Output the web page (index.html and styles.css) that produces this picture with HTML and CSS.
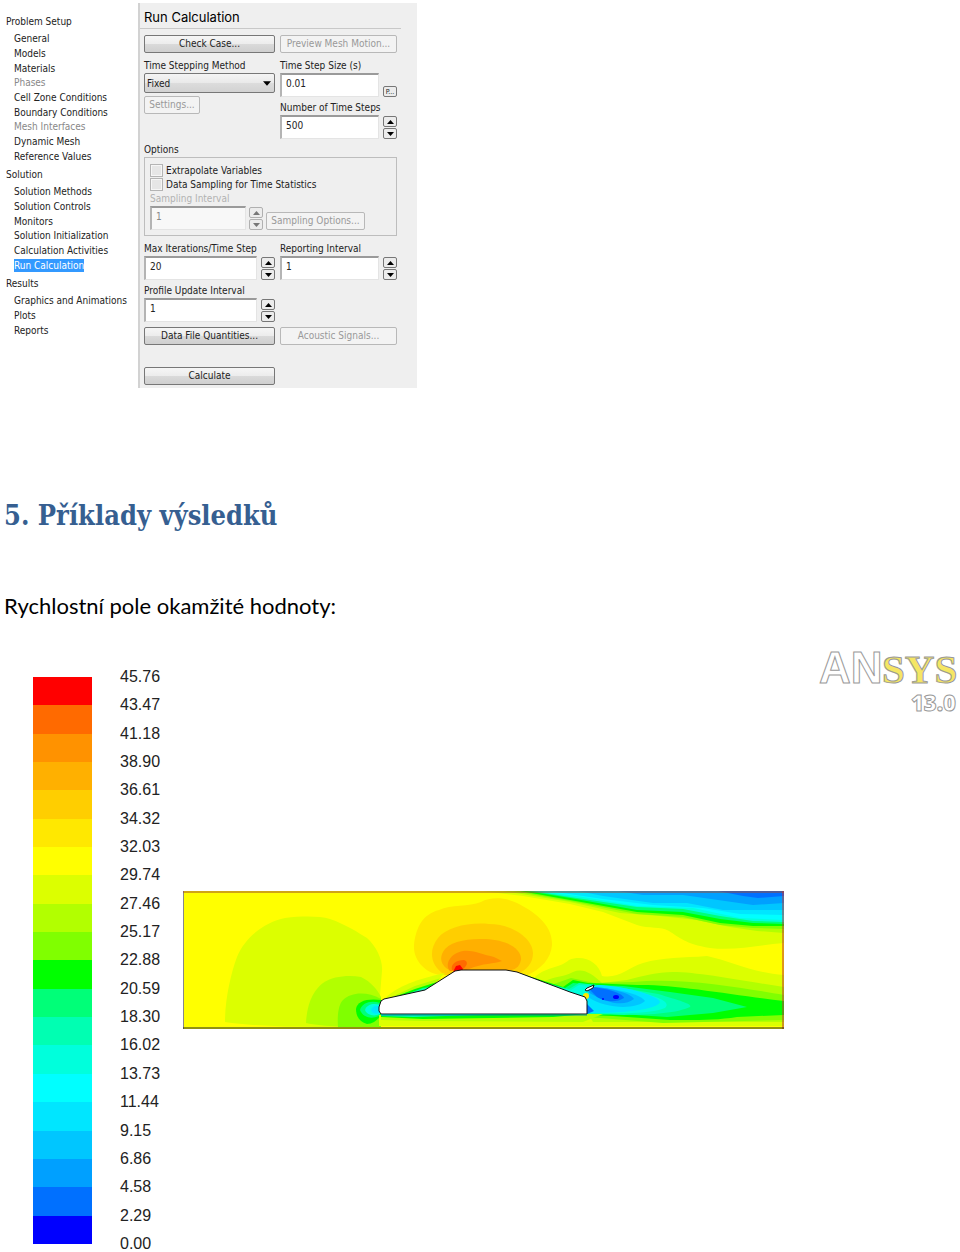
FILE: index.html
```html
<!DOCTYPE html>
<html lang="cs">
<head>
<meta charset="utf-8">
<meta name="viewport" content="width=device-width, initial-scale=1">
<title>Příklady výsledků</title>
<link rel="stylesheet" href="styles.css">
</head>
<body>
<svg class="defs" width="0" height="0" aria-hidden="true">
  <symbol id="up" viewBox="0 0 7 4"><path d="M0 4 3.500 0 7 4z"/></symbol>
  <symbol id="down" viewBox="0 0 7 4"><path d="M0 0h7L3.500 4z"/></symbol>
</svg>
<main class="page">
  <section class="solver">
    <nav class="tree" aria-label="Problem Setup">
      <h2 class="tree-title">Problem Setup</h2>
      <ul class="tree-list tree-setup">
        <li>General</li><li>Models</li><li>Materials</li><li class="muted">Phases</li><li>Cell Zone Conditions</li><li>Boundary Conditions</li><li class="muted">Mesh Interfaces</li><li>Dynamic Mesh</li><li>Reference Values</li>
      </ul>
      <h2 class="tree-title">Solution</h2>
      <ul class="tree-list tree-solution">
        <li>Solution Methods</li><li>Solution Controls</li><li>Monitors</li><li>Solution Initialization</li><li>Calculation Activities</li><li><span class="selected">Run Calculation</span></li>
      </ul>
      <h2 class="tree-title">Results</h2>
      <ul class="tree-list tree-results">
        <li>Graphics and Animations</li><li>Plots</li><li>Reports</li>
      </ul>
    </nav>

    <form class="panel">
      <h2 class="panel-title">Run Calculation</h2>
      <div class="panel-body">
        <div class="columns">
          <button class="btn" type="button">Check Case...</button>
          <button class="btn" type="button" disabled>Preview Mesh Motion...</button>
        </div>
        <div class="columns">
          <div class="stack">
            <div class="field">
              <label for="method">Time Stepping Method</label>
              <div class="select-wrap">
                <select class="select" id="method"><option>Fixed</option></select>
                <svg class="caret"><use href="#down"/></svg>
              </div>
            </div>
            <button class="btn btn-small" type="button" disabled>Settings...</button>
          </div>
          <div class="stack">
            <div class="field">
              <label for="size">Time Step Size (s)</label>
              <div class="entry"><input class="text" id="size" value="0.01"><button class="mini" type="button">P...</button></div>
            </div>
            <div class="field">
              <label for="steps">Number of Time Steps</label>
              <div class="entry"><input class="text" id="steps" value="500">
                <span class="spin"><button type="button" aria-label="Increase"><svg><use href="#up"/></svg></button><button type="button" aria-label="Decrease"><svg><use href="#down"/></svg></button></span>
              </div>
            </div>
          </div>
        </div>
        <fieldset class="options">
          <legend>Options</legend>
          <div class="options-box">
            <label class="check"><input type="checkbox">Extrapolate Variables</label>
            <label class="check"><input type="checkbox">Data Sampling for Time Statistics</label>
            <label class="disabled" for="sampling">Sampling Interval</label>
            <div class="entry sampling"><input class="text" id="sampling" value="1" disabled>
              <span class="spin"><button type="button" aria-label="Increase" disabled><svg><use href="#up"/></svg></button><button type="button" aria-label="Decrease" disabled><svg><use href="#down"/></svg></button></span>
              <button class="btn btn-sampling" type="button" disabled>Sampling Options...</button>
            </div>
          </div>
        </fieldset>
        <div class="columns intervals">
          <div class="field">
            <label for="max">Max Iterations/Time Step</label>
            <div class="entry"><input class="text" id="max" value="20">
              <span class="spin"><button type="button" aria-label="Increase"><svg><use href="#up"/></svg></button><button type="button" aria-label="Decrease"><svg><use href="#down"/></svg></button></span>
            </div>
          </div>
          <div class="field">
            <label for="report">Reporting Interval</label>
            <div class="entry"><input class="text" id="report" value="1">
              <span class="spin"><button type="button" aria-label="Increase"><svg><use href="#up"/></svg></button><button type="button" aria-label="Decrease"><svg><use href="#down"/></svg></button></span>
            </div>
          </div>
          <div class="field">
            <label for="profile">Profile Update Interval</label>
            <div class="entry"><input class="text" id="profile" value="1">
              <span class="spin"><button type="button" aria-label="Increase"><svg><use href="#up"/></svg></button><button type="button" aria-label="Decrease"><svg><use href="#down"/></svg></button></span>
            </div>
          </div>
        </div>
        <div class="columns actions">
          <button class="btn" type="button">Data File Quantities...</button>
          <button class="btn" type="button" disabled>Acoustic Signals...</button>
          <button class="btn" type="button">Calculate</button>
        </div>
      </div>
    </form>
  </section>

  <h1 class="heading">5. Příklady výsledků</h1>
  <p class="intro">Rychlostní pole okamžité hodnoty:</p>

  <figure class="result">
    <div class="legend">
      <div class="scale" aria-hidden="true">
        <i class="c19"></i><i class="c18"></i><i class="c17"></i><i class="c16"></i><i class="c15"></i><i class="c14"></i><i class="c13"></i><i class="c12"></i><i class="c11"></i><i class="c10"></i><i class="c9"></i><i class="c8"></i><i class="c7"></i><i class="c6"></i><i class="c5"></i><i class="c4"></i><i class="c3"></i><i class="c2"></i><i class="c1"></i><i class="c0"></i>
      </div>
      <ul class="values">
        <li>45.76</li><li>43.47</li><li>41.18</li><li>38.90</li><li>36.61</li><li>34.32</li><li>32.03</li><li>29.74</li><li>27.46</li><li>25.17</li><li>22.88</li><li>20.59</li><li>18.30</li><li>16.02</li><li>13.73</li><li>11.44</li><li>9.15</li><li>6.86</li><li>4.58</li><li>2.29</li><li>0.00</li>
      </ul>
    </div>

    <svg class="plot" viewBox="0 0 601 138" role="img" aria-label="Rychlostní pole">
      <rect class="c13" width="601" height="138"/>
      <!-- stagnation zone ahead of the nose -->
      <path class="c12" d="M42 131C42 108 48 82 54 66C62 46 82 31 102 27C120 25 136 25 147 28C162 33 176 42 184 47C194 56 200 70 199 80L197 104V136C150 136 80 137 42 131z"/>
      <path class="c11" d="M123 132C124 110 132 98 140 92C150 85 166 84 178 86C188 91 194 98 198 106V136C170 136 140 136 123 132z"/>
      <path class="c10" d="M155 136C154 122 156 113 160 109C168 101 184 100 198 108V136z"/>
      <path class="c9" d="M173 118C174 110 184 107 199 109L198 125C193 130 189 133 184 133C177 131 173 126 173 118z"/>
      <path class="c8" d="M177 119C179 111 189 109 197 112V124C190 129 180 127 177 119z"/>
      <path class="c6" d="M182 119C184 113 191 112 197 114V123C191 126 184 124 182 119z"/>
      <path class="c4" d="M188 119C190 114 194 114 197 116V122C192 124 189 122 188 119z"/>
      <!-- accelerated flow above the roof -->
      <path class="c14" d="M257 84C243 82 230 70 231 54C233 36 240 23 256 19C268 13 286 16 298 11C307 6 322 6 334 12C350 20 370 33 369 54C368 68 358 78 343 85z"/>
      <path class="c15" d="M262 84C246 74 246 58 255 47C264 36 286 31 306 33C330 33 350 48 350 62C350 72 344 79 334 83z"/>
      <path class="c16" d="M268 80C255 74 257 64 262 58C270 49 286 48 303 48C324 49 339 58 338 69C336 77 332 79 322 80z"/>
      <path class="c17" d="M267 80C261 73 268 62 280 60C292 59 300 64 311 66L319 70C311 73 300 72 286 78L280 80z"/>
      <path class="c18" d="M269 79C267 73 274 69 281 69C286 71 284 75 279 79z"/>
      <path class="c19" d="M270 81 273 75 277 74 280 78 278 81z"/>
      <!-- slow layer under the upper boundary -->
      <path class="c12" d="M300 0 340 5 387 13 420 21 454 34C466 38 478 35 486 40C496 46 502 53 527 57C552 60 576 54 601 52V0z"/>
      <path class="c11" d="M320 0 387 11 437 22 477 25 514 29 547 36 574 40 601 42V0z"/>
      <path class="c10" d="M330 0 387 10 454 23 500 26 537 34 570 37 601 38V0z"/>
      <path class="c9" d="M337 0 387 9 454 21 500 24 537 32 570 35 601 35V0z"/>
      <path class="c8" d="M344 0 387 7 454 19 500 21 537 28 570 32 601 33V0z"/>
      <path class="c6" d="M350 0 387 6 454 16 500 18 537 25 570 30 601 31V0z"/>
      <path class="c5" d="M357 0 400 6 454 15 510 17 557 27 601 29V0z"/>
      <path class="c4" d="M366 0 420 8 470 14 520 17 557 23 601 24V0z"/>
      <path class="c3" d="M395 0 420 5 470 12 504 12 540 19 601 19V0z"/>
      <path class="c2" d="M435 0 460 4 500 4 535 9 570 14 601 12V0z"/>
      <path class="c1" d="M535 0 560 5 575 7 601 5V0z"/>
      <!-- wake -->
      <path class="c12" d="M350 88C362 75 376 78 386 69C400 63 416 71 419 85C436 88 444 77 460 72C480 66 500 67 524 65C548 70 570 82 601 84V135H196V124H404z"/>
      <path class="c11" d="M362 90C372 85 382 86 390 81C400 77 408 82 419 92L444 89C460 85 474 81 490 81C516 81 560 90 601 96V131H410L398 110z"/>
      <path class="c10" d="M368 94 388 87 412 92 450 91C500 86 560 97 601 104V129L480 132 404 126z"/>
      <path class="c9" d="M336 82 380 96 390 89 405 92 454 94C490 93 550 104 601 110V124L554 126C530 130 500 129 487 129L430 125 404 124z"/>
      <path class="c8" d="M350 88 382 97 390 92 414 94 440 95 487 101 530 107 564 116 530 122 484 126 437 123 404 123z"/>
      <path class="c7" d="M360 92 386 98 396 92 440 97 475 103C495 109 510 113 507 116C490 124 450 125 404 123z"/>
      <path class="c6" d="M366 95 388 99 396 94 430 96 455 101C478 106 488 112 482 117C465 124 430 122 404 122z"/>
      <path class="c4" d="M414 94C434 94 474 103 477 111C474 119 440 122 404 122L405 104z"/>
      <path class="c3" d="M409 97C425 96 458 102 462 110C454 118 424 119 405 106z"/>
      <path class="c2" d="M408 96C424 96 448 102 451 108C442 115 426 114 405 101z"/>
      <path class="c1" d="M408 96C422 97 440 102 441 107C435 111 424 112 414 106L406 98z"/>
      <ellipse class="c0" cx="433" cy="106" rx="3" ry="2"/>
      <circle class="c0" cx="420" cy="108" r="1"/>
      <path class="c1" d="M404 113 411 120 404 123z"/>
      <circle class="c14" cx="403" cy="105" r="3"/>
      <!-- hood and underbody layers -->
      <path class="c12" d="M200 109C215 94 235 88 262 82L242 101z"/>
      <path class="c11" d="M202 109 232 95 258 87 242 101z"/>
      <path class="c9" d="M206 108 232 98 254 91 242 100z"/>
      <path class="c7" d="M216 106 240 97 247 96 241 100z"/>
      <path class="c11" d="M198 123H420L400 131 240 130 198 129z"/>
      <path class="c9" d="M198 123H404L370 126 240 128 198 126z"/>
      <path class="c7" d="M198 123H330L230 126 198 125z"/>
      <path class="car" d="M196 116 198 110 201 108 242 99 272 80 278 79H323L334 81 387 101 402 106 404 110V123H198L196 120z"/>
      <path class="underbody" d="M198 124H404"/>
      <path class="car" d="M402 99 404 97 411 94 410 97 404 100z"/>
      <path class="wall-left" d="M.5 0V138"/>
      <path class="wall-top" d="M0 1H601"/>
      <path class="wall-right" d="M600 0V138"/>
      <path class="wall-bottom" d="M0 137H601"/>
    </svg>

    <svg class="logo" viewBox="0 0 142 68" role="img" aria-label="ANSYS 13.0">
      <text class="logo-an" x="1" y="35">AN</text>
      <text class="logo-sys" x="64" y="35">SYS</text>
      <text class="logo-version" x="138" y="63">13.0</text>
    </svg>
  </figure>
</main>
</body>
</html>
```
FILE: styles.css
```css
* { box-sizing: border-box; }
body { margin: 0; background: #fff; color: #000; }
h1, h2, p, ul, figure, fieldset { margin: 0; padding: 0; font-weight: 400; }
ul { list-style: none; }
.defs { display: block; height: 0; }
.page { padding-top: 3px; }

/* Solver window */
.solver, .solver button, .solver input, .solver select {
  font-family: "DejaVu Sans Condensed", "DejaVu Sans", sans-serif;
  font-size: 10px;
  color: #222;
}
.solver { display: flex; align-items: stretch; }
.tree { width: 138px; flex: none; padding: 8px 0 0 6px; white-space: nowrap; }
.tree-title { font-size: 10px; line-height: 21px; }
.tree-list { display: grid; grid-auto-rows: 1fr; align-items: center; padding-left: 8px; line-height: 14px; }
.tree-setup { min-height: 132px; }
.tree-solution { min-height: 88px; }
.tree-results { min-height: 44px; }
.muted { color: #888; }
.selected { display: inline-block; line-height: 13px; background: #3399ff; color: #fff; }

.panel { width: 279px; background: #efefef; border-left: 2px solid #d2d2d2; padding-bottom: 3px; }
.panel-title {
  margin-right: 16px; padding: 4px 0 0 4px;
  border-bottom: 1px solid #c8c8c8;
  font: 13px/21px Inter, "Liberation Sans", sans-serif; color: #000;
}
.panel-body { display: flex; flex-direction: column; gap: 5px; padding: 6px 20px 0 4px; white-space: nowrap; }
.columns { display: grid; grid-template-columns: 131px minmax(0, 1fr); column-gap: 5px; row-gap: 3px; }
.stack { display: flex; flex-direction: column; gap: 3px; align-items: stretch; min-width: 0; }
.field { min-width: 0; }
.field label, .options legend { display: block; line-height: 15px; }
.btn {
  height: 18px; padding: 0 4px; line-height: 14px;
  border: 1px solid #777; border-radius: 2px;
  background: linear-gradient(#f6f6f6, #ececec 50%, #dadada 51%, #cfcfcf);
}
.solver .btn:disabled { color: #999; background: #f3f3f3; border-color: #b8b8b8; }
.btn-small { align-self: flex-start; width: 56px; }
.select-wrap { position: relative; }
.select {
  display: block; appearance: none; width: 100%; height: 20px; padding: 0 2px;
  border: 1px solid #777; border-radius: 2px;
  background: linear-gradient(#f4f4f4, #e9e9e9 50%, #dcdcdc 51%, #d2d2d2);
}
.caret { position: absolute; right: 4px; top: 8px; width: 8px; height: 5px; }
.entry { display: flex; gap: 4px; height: 24px; align-items: flex-end; }
.text {
  flex: 1 1 0; width: 0; min-width: 0; height: 24px; padding: 0 4px 4px;
  border: 1px solid #e4e4e4; border-top: 2px solid #9a9a9a; border-left: 2px solid #b4b4b4;
  background: #fff;
}
.text:disabled { background: #f8f8f8; }
.solver .text:disabled { color: #888; }
.spin { display: flex; flex: none; flex-direction: column; width: 14px; gap: 1px; }
.spin button, .mini {
  display: flex; flex: none; align-items: center; justify-content: center;
  width: 14px; height: 11px; padding: 0;
  border: 1px solid #777; border-radius: 2px; background: #ececec;
}
.spin svg { width: 7px; height: 4px; }
.spin button:disabled { border-color: #b0b0b0; }
.spin button:disabled svg { fill: #777; }
.solver .mini { font-size: 7px; }
.options { border: 0; min-width: 0; margin-top: -2px; }
.options legend { padding: 0; }
.options-box { border: 1px solid #bdbdbd; padding: 5px; }
.check { display: flex; align-items: center; gap: 3px; height: 14px; }
.check input {
  appearance: none; width: 13px; height: 13px; margin: 0;
  border: 1px solid #b4b4b4; background: #e6e6e6; box-shadow: inset 0 0 0 1px #f6f6f6;
}
.disabled { display: block; line-height: 15px; color: #b2b2b2; }
.sampling { gap: 3px; }
.sampling .text { flex: 0 0 96px; }
.btn-sampling { width: 99px; }
.actions { row-gap: 22px; }

/* Document text */
.heading {
  margin-top: 110px; padding-left: 4px;
  font: 700 27px/36px "DejaVu Serif Condensed", "DejaVu Serif", serif;
  color: #365f91;
}
.intro { margin-top: 57px; padding-left: 4px; font: 22px/30px Lato, sans-serif; }

/* Velocity field */
.result {
  display: grid; grid-template-columns: 183px minmax(0, 1fr) 142px; align-items: start;
  margin-top: 27px;
}
.legend { display: grid; grid-template-columns: 59px auto; column-gap: 28px; height: 583px; margin-top: 21px; padding-left: 33px; }
.scale { display: flex; flex-direction: column; margin: 8px 0; }
.scale i { flex: 1; }
.values {
  display: flex; flex-direction: column; justify-content: space-between;
  font: 16px/16px "Liberation Sans", Arial, sans-serif; color: #222;
}
.plot { display: block; width: calc(100% - 34px); margin-top: 243px; }
.logo { display: block; width: 100%; overflow: visible; }

.c19 { background: #ff0000; fill: #ff0000; }
.c18 { background: #ff6a00; fill: #ff6a00; }
.c17 { background: #ff9200; fill: #ff9200; }
.c16 { background: #ffb000; fill: #ffb000; }
.c15 { background: #ffce00; fill: #ffce00; }
.c14 { background: #ffe800; fill: #ffe800; }
.c13 { background: #ffff00; fill: #ffff00; }
.c12 { background: #dcff00; fill: #dcff00; }
.c11 { background: #b2ff00; fill: #b2ff00; }
.c10 { background: #80ff00; fill: #80ff00; }
.c9 { background: #00ff00; fill: #00ff00; }
.c8 { background: #00ff78; fill: #00ff78; }
.c7 { background: #00ffb2; fill: #00ffb2; }
.c6 { background: #00ffdc; fill: #00ffdc; }
.c5 { background: #00ffff; fill: #00ffff; }
.c4 { background: #00e6ff; fill: #00e6ff; }
.c3 { background: #00c6ff; fill: #00c6ff; }
.c2 { background: #00a0ff; fill: #00a0ff; }
.c1 { background: #0070ff; fill: #0070ff; }
.c0 { background: #0000ff; fill: #0000ff; }
.car { fill: #fff; stroke: #111; stroke-width: 1; }
.underbody { stroke: #008ca0; stroke-width: 1; }
.wall-left { stroke: #888; }
.wall-top { stroke: #a0482c; }
.wall-right { stroke: #c03030; }
.wall-bottom { stroke: #222; }

.logo text { stroke: #999; stroke-width: 1; }
.logo .logo-an { font: 700 44px "Liberation Sans", sans-serif; fill: #fff; }
.logo .logo-sys { font: 700 41px "Liberation Serif", serif; fill: #f5e663; }
.logo .logo-version { font: 800 22px "Open Sans", sans-serif; fill: #fff; text-anchor: end; }
```
